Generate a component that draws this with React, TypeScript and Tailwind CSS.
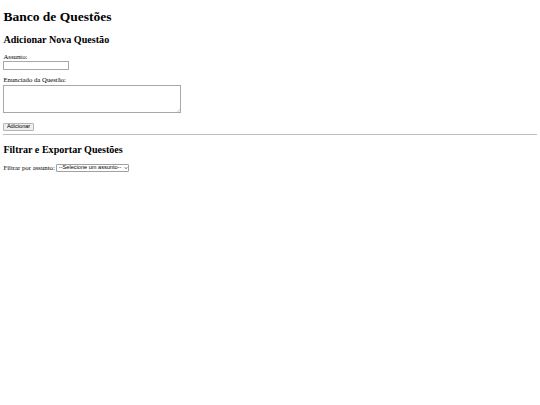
import React, { useState } from 'react';

// Banco de questões: formulário simples para adicionar e filtrar questões

const assuntos = ['Matemática', 'Português', 'História', 'Geografia'];

export default function App() {
  const [assunto, setAssunto] = useState('');
  const [enunciado, setEnunciado] = useState('');
  const [filtro, setFiltro] = useState('');

  const adicionar = (e: React.FormEvent) => {
    e.preventDefault();
    setAssunto('');
    setEnunciado('');
  };

  return (
    <div className="min-h-[405px] bg-white px-[3.4px] font-['Liberation_Serif','Times_New_Roman',serif] text-black">
      <h1 className="pt-[9px] text-[13.5px] leading-[15.5px] font-bold">Banco de Questões</h1>

      <h2 className="mt-[9px] text-[10.1px] leading-[11.6px] font-bold">Adicionar Nova Questão</h2>

      <form onSubmit={adicionar} className="mt-[8.4px]">
        <label htmlFor="assunto" className="block text-[6.75px] leading-[7.8px]">
          Assunto:
        </label>
        <input
          id="assunto"
          value={assunto}
          onChange={(e) => setAssunto(e.target.value)}
          className="block h-[9px] w-[66px] border border-[#a9a9a9] bg-white px-[1px] text-[5.6px] outline-none"
        />

        <label htmlFor="enunciado" className="mt-[5.5px] block text-[6.75px] leading-[7.8px]">
          Enunciado da Questão:
        </label>
        <div className="relative mt-[1.6px] w-[178px]">
          <textarea
            id="enunciado"
            value={enunciado}
            onChange={(e) => setEnunciado(e.target.value)}
            className="block h-[27.5px] w-full resize-none border border-[#a9a9a9] bg-white px-[1px] text-[5.6px] outline-none"
          />
          {/* alça de redimensionar */}
          <svg
            className="pointer-events-none absolute bottom-[1px] right-[1px] h-[3px] w-[3px]"
            viewBox="0 0 6 6"
            stroke="#b5b5b5"
            strokeWidth="1"
          >
            <path d="M6 0L0 6M6 3L3 6" />
          </svg>
        </div>

        <button
          type="submit"
          className="mt-[10.5px] block h-[8px] rounded-[1px] border border-[#b4b4b4] bg-[#efefef] px-[2.5px] font-['Liberation_Sans',Arial,sans-serif] text-[5.6px] leading-none"
        >
          Adicionar
        </button>
      </form>

      <hr className="mt-[3px] border-0 border-t border-[#bdbdbd]" />

      <h2 className="mt-[8.4px] text-[10.1px] leading-[11.6px] font-bold">Filtrar e Exportar Questões</h2>

      <div className="mt-[8.4px] flex items-center gap-[1.6px] text-[6.75px] leading-[7.8px]">
        <label htmlFor="filtro">Filtrar por assunto:</label>
        <div className="relative">
          <select
            id="filtro"
            value={filtro}
            onChange={(e) => setFiltro(e.target.value)}
            className="block h-[8.5px] w-[73px] appearance-none rounded-[1px] border border-[#a0a0a0] bg-white pl-[1.5px] font-['Liberation_Sans',Arial,sans-serif] text-[5.6px] leading-none outline-none"
          >
            <option value="">--Selecione um assunto--</option>
            {assuntos.map((a) => (
              <option key={a} value={a}>
                {a}
              </option>
            ))}
          </select>
          <svg
            className="pointer-events-none absolute right-[1.5px] top-1/2 h-[4px] w-[4px] -translate-y-1/2"
            viewBox="0 0 10 10"
            fill="none"
            stroke="#222"
            strokeWidth="2"
          >
            <path d="M2 3.5l3 3 3-3" />
          </svg>
        </div>
      </div>
    </div>
  );
}
